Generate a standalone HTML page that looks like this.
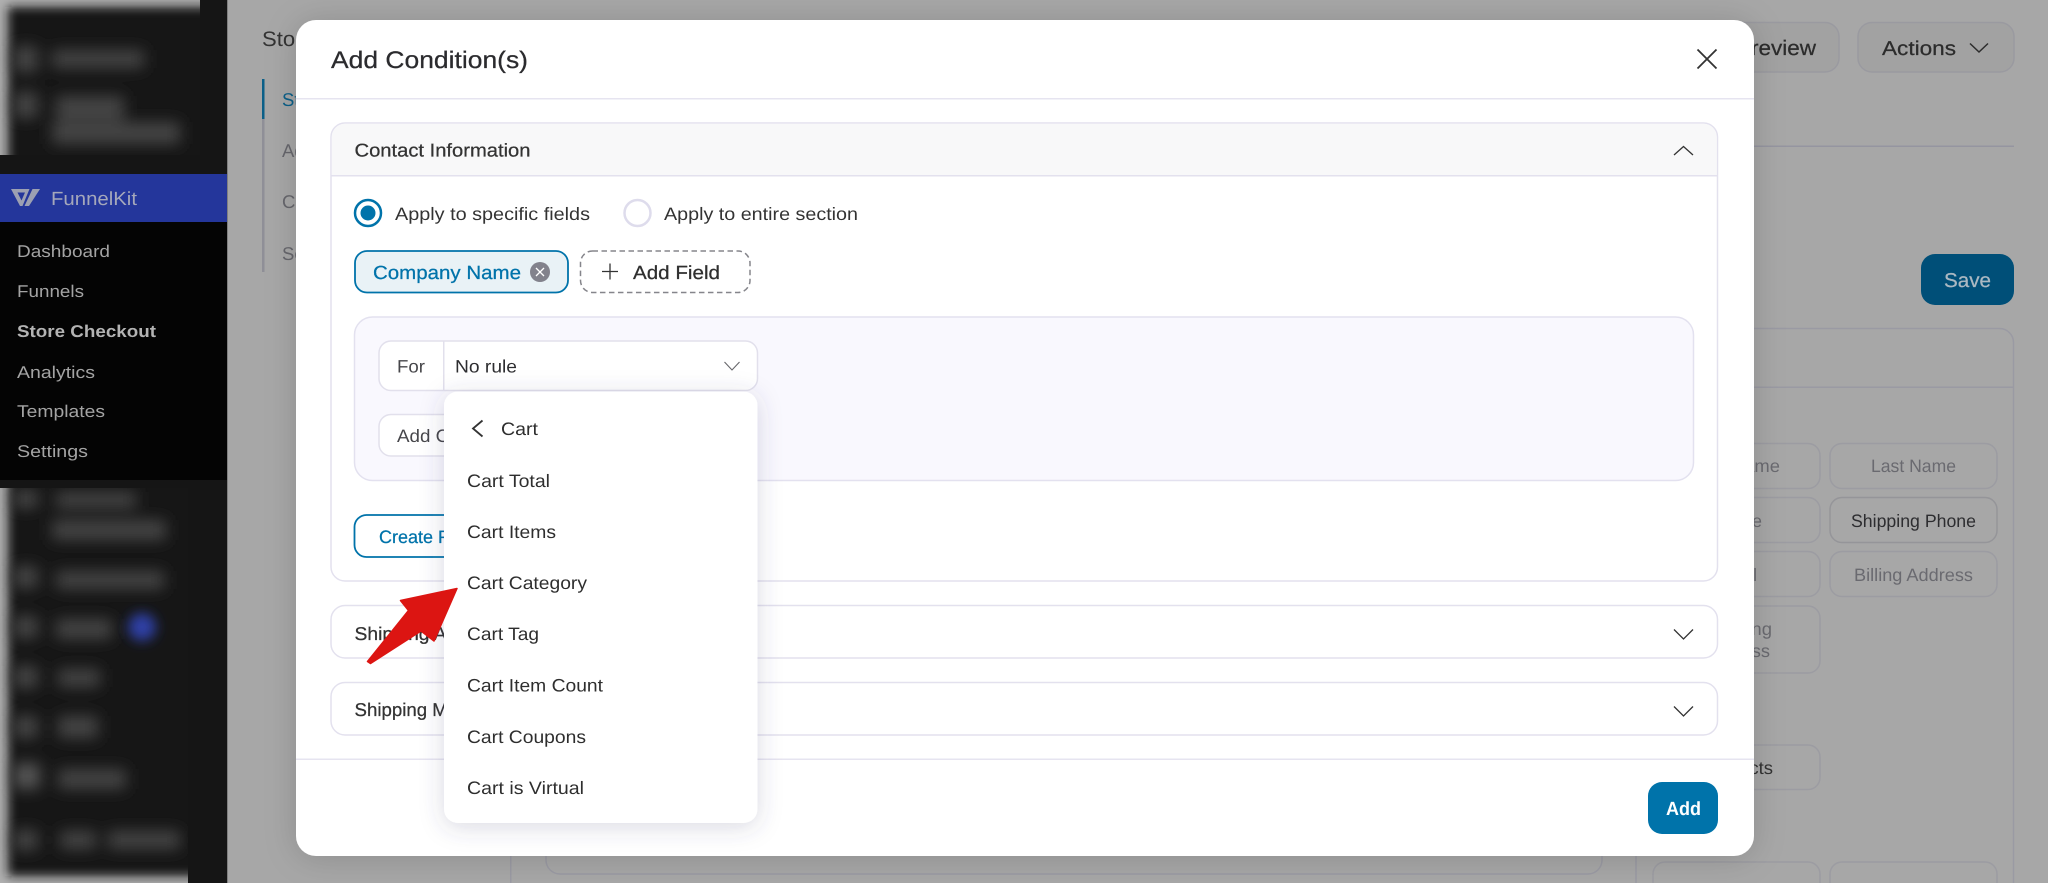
<!DOCTYPE html>
<html lang="en"><head><meta charset="utf-8"><title>Add Condition(s)</title>
<style>
html,body{margin:0;padding:0;width:2048px;height:883px;overflow:hidden;background:#a7a7a7}
svg{display:block}
text{font-family:"Liberation Sans",sans-serif;text-rendering:geometricPrecision}
.m{stroke-width:.25}
</style></head><body>
<svg xmlns="http://www.w3.org/2000/svg" width="2048" height="883" viewBox="0 0 2048 883">
<defs>
<filter id="b6" x="-30%" y="-30%" width="160%" height="160%"><feGaussianBlur stdDeviation="5"/></filter>
<filter id="b4" x="-80%" y="-120%" width="260%" height="340%"><feGaussianBlur stdDeviation="7.500"/></filter>
<filter id="b5" x="-100%" y="-100%" width="300%" height="300%"><feGaussianBlur stdDeviation="6"/></filter>
<filter id="ms" x="-10%" y="-10%" width="120%" height="120%"><feDropShadow dx="0" dy="2" stdDeviation="16" flood-color="#000" flood-opacity=".16"/></filter>
<filter id="ds" x="-25%" y="-15%" width="150%" height="130%"><feDropShadow dx="0" dy="4" stdDeviation="12" flood-color="#4a4870" flood-opacity=".2"/></filter>
<clipPath id="c1"><rect x="0" y="0" width="200" height="155"/></clipPath>
<clipPath id="c2"><rect x="0" y="488" width="188" height="395"/></clipPath>
</defs>

<rect width="2048" height="883" fill="#a7a7a7"/>

<!-- Sidebar -->
<rect width="227" height="883" fill="#151515"/>
<rect x="227" width="1" height="883" fill="#808080"/>
<g clip-path="url(#c1)">
<rect x="0" y="0" width="200" height="155" fill="#b0b0b0"/>
<rect x="8" y="7" width="400" height="400" fill="#151515" filter="url(#b6)"/>
<g filter="url(#b4)" fill="#444">
<rect x="14" y="46" width="24" height="26"/><rect x="52" y="50" width="92" height="18"/>
<rect x="14" y="92" width="24" height="26"/><rect x="56" y="96" width="68" height="24"/>
<rect x="52" y="122" width="128" height="22"/>
</g></g>
<g clip-path="url(#c2)">
<rect x="0" y="488" width="188" height="395" fill="#b0b0b0"/>
<rect x="8" y="470" width="400" height="406" fill="#151515" filter="url(#b6)"/>
<g filter="url(#b4)" fill="#444">
<rect x="14" y="490" width="24" height="18"/><rect x="56" y="492" width="80" height="16"/><rect x="52" y="520" width="114" height="20"/>
<rect x="14" y="566" width="24" height="22"/><rect x="56" y="571" width="108" height="18"/>
<rect x="14" y="616" width="24" height="22"/><rect x="56" y="619" width="56" height="20"/>
<rect x="14" y="666" width="24" height="22"/><rect x="58" y="669" width="42" height="18"/>
<rect x="14" y="716" width="24" height="22"/><rect x="58" y="716" width="40" height="22"/>
<rect x="14" y="763" width="26" height="26" fill="#555"/><rect x="58" y="769" width="68" height="20"/>
<rect x="14" y="830" width="24" height="20"/><rect x="60" y="831" width="36" height="18"/><rect x="108" y="831" width="72" height="18"/>
</g>
<circle cx="142" cy="627" r="14" fill="#2f40a5" filter="url(#b5)"/>
</g>
<rect x="0" y="174" width="227" height="48" fill="#24369b"/>
<path d="M11 189H29.500L22.500 206H20ZM17.500 192.500L21.500 200.500L25 192.500Z" fill="#9ca0b2" fill-rule="evenodd"/>
<path d="M32.500 189H40L29 206H24.500Z" fill="#9ca0b2"/>
<text x="51" y="205" font-size="19" fill="#a5a8bb" textLength="86" lengthAdjust="spacingAndGlyphs">FunnelKit</text>
<rect x="0" y="222" width="227" height="258" fill="#040404"/>
<g font-size="17" fill="#a3a3a3">
<text x="17" y="257" textLength="93" lengthAdjust="spacingAndGlyphs">Dashboard</text>
<text x="17" y="297" textLength="67" lengthAdjust="spacingAndGlyphs">Funnels</text>
<text x="17" y="337" textLength="139" lengthAdjust="spacingAndGlyphs" font-weight="700" fill="#b3b3b3">Store Checkout</text>
<text x="17" y="378" textLength="78" lengthAdjust="spacingAndGlyphs">Analytics</text>
<text x="17" y="417" textLength="88" lengthAdjust="spacingAndGlyphs">Templates</text>
<text x="17" y="457" textLength="71" lengthAdjust="spacingAndGlyphs">Settings</text>
</g>

<!-- Background page -->
<text x="262" y="46" font-size="21" fill="#333" textLength="152" lengthAdjust="spacingAndGlyphs">Store Checkout</text>
<rect x="262" y="79" width="2.500" height="193" fill="#8f8f97"/>
<rect x="262" y="79" width="2.500" height="40" fill="#0b5f88"/>
<g font-size="18.500" fill="#66666c">
<text x="282" y="106" fill="#0b5f88">Store</text>
<text x="282" y="157">Add</text>
<text x="282" y="208">Cart</text>
<text x="282" y="260">Settings</text>
</g>
<rect x="1500" y="22.500" width="339" height="49.500" rx="14" fill="#a2a2a2" stroke="#9a9aa0" stroke-width="1.500"/>
<text x="1736" y="55" font-size="21" fill="#2c2c2c" stroke="#2c2c2c" class="m" textLength="80" lengthAdjust="spacingAndGlyphs">Preview</text>
<rect x="1858" y="22.500" width="156" height="49.500" rx="14" fill="#a2a2a2" stroke="#9a9aa0" stroke-width="1.500"/>
<text x="1882" y="55" font-size="20" fill="#2c2c2c" stroke="#2c2c2c" class="m" textLength="74" lengthAdjust="spacingAndGlyphs">Actions</text>
<path d="M1970 43.500L1979 52L1988 43.500" fill="none" stroke="#2c2c2c" stroke-width="1.500"/>
<rect x="1700" y="145.500" width="314" height="1.500" fill="#9595a0"/>
<rect x="1921" y="254" width="93" height="51" rx="14" fill="#004f78"/>
<text x="1944" y="287" font-size="20" fill="#aab8c2" stroke="#aab8c2" class="m" textLength="47" lengthAdjust="spacingAndGlyphs">Save</text>
<path d="M1636 883V342.500a14 14 0 0 1 14-14H1999.500a14 14 0 0 1 14 14V883" fill="none" stroke="#9a9aa3" stroke-width="1.500"/>
<rect x="1636" y="386.500" width="377.500" height="1.500" fill="#9a9aa3"/>
<rect x="510" y="840" width="1.500" height="43" fill="#9a9aa3"/>
<rect x="546" y="780" width="1056" height="94" rx="14" fill="none" stroke="#9a9aa3" stroke-width="1.500"/>
<g fill="none" stroke="#9c9ca2" stroke-width="1.500">
<rect x="1653" y="443.500" width="167" height="45" rx="12"/>
<rect x="1653" y="497.500" width="167" height="45" rx="12"/>
<rect x="1653" y="551.500" width="167" height="45" rx="12"/>
<rect x="1653" y="606" width="167" height="67" rx="12"/>
<rect x="1653" y="745" width="167" height="44.500" rx="12"/>
<path d="M1653 883V874a12 12 0 0 1 12-12H1808a12 12 0 0 1 12 12V883"/>
<rect x="1830" y="443.500" width="167" height="45" rx="12"/>
<rect x="1830" y="497.500" width="167" height="45" rx="12" stroke="#959599"/>
<rect x="1830" y="551.500" width="167" height="45" rx="12"/>
<path d="M1830 883V874a12 12 0 0 1 12-12H1985a12 12 0 0 1 12 12V883"/>
</g>
<g font-size="18" fill="#6a6a70">
<text x="1690" y="472" textLength="90" lengthAdjust="spacingAndGlyphs">First Name</text>
<text x="1710" y="527" textLength="52" lengthAdjust="spacingAndGlyphs">Phone</text>
<text x="1713" y="581" textLength="44" lengthAdjust="spacingAndGlyphs">Email</text>
<text x="1700" y="635" textLength="72" lengthAdjust="spacingAndGlyphs">Shipping</text>
<text x="1703" y="657" textLength="67" lengthAdjust="spacingAndGlyphs">Address</text>
<text x="1700" y="774" fill="#333" textLength="73" lengthAdjust="spacingAndGlyphs">Products</text>
<text x="1871" y="472" textLength="85" lengthAdjust="spacingAndGlyphs">Last Name</text>
<text x="1851" y="527" fill="#2d2d30" textLength="125" lengthAdjust="spacingAndGlyphs">Shipping Phone</text>
<text x="1854" y="581" textLength="119" lengthAdjust="spacingAndGlyphs">Billing Address</text>
</g>

<!-- Modal -->
<rect x="296" y="20" width="1458" height="836" rx="20" fill="#fff" filter="url(#ms)"/>
<text x="331" y="68" font-size="24" fill="#2b2b2e" stroke="#2b2b2e" class="m" textLength="197" lengthAdjust="spacingAndGlyphs">Add Condition(s)</text>
<path d="M1697.500 49.500L1716.500 68.500M1716.500 49.500L1697.500 68.500" stroke="#333" stroke-width="1.800" fill="none"/>
<rect x="296" y="98" width="1458" height="1.500" fill="#e6e4f0"/>

<!-- Contact section -->
<rect x="331" y="123" width="1386.500" height="458" rx="14" fill="#fff" stroke="#e3e1ee" stroke-width="1.500"/>
<path d="M331.800 175V137a13.200 13.200 0 0 1 13.200-13.200H1703.500a13.200 13.200 0 0 1 13.200 13.200V175Z" fill="#f8f8f9"/>
<rect x="331" y="175" width="1386.500" height="1.500" fill="#e3e1ee"/>
<text x="354.500" y="156.500" font-size="18.500" fill="#333" stroke="#333" class="m" textLength="176" lengthAdjust="spacingAndGlyphs">Contact Information</text>
<path d="M1674 155L1683.500 146.500L1693 155" fill="none" stroke="#333" stroke-width="1.300"/>
<circle cx="368" cy="213" r="13" fill="#fff" stroke="#0073aa" stroke-width="2.500"/>
<circle cx="368" cy="213" r="7.500" fill="#0073aa"/>
<text x="395" y="220" font-size="18" fill="#333" textLength="195" lengthAdjust="spacingAndGlyphs">Apply to specific fields</text>
<circle cx="637.500" cy="213" r="13" fill="#fff" stroke="#dedcec" stroke-width="2.500"/>
<text x="664" y="220" font-size="18" fill="#333" textLength="194" lengthAdjust="spacingAndGlyphs">Apply to entire section</text>
<rect x="355" y="251" width="213" height="41.500" rx="12" fill="#e9f2f6" stroke="#0073aa" stroke-width="1.800"/>
<text x="373" y="279" font-size="19" fill="#0073aa" stroke="#0073aa" class="m" textLength="148" lengthAdjust="spacingAndGlyphs">Company Name</text>
<circle cx="540" cy="272" r="10" fill="#82828c"/>
<path d="M536 268L544 276M544 268L536 276" stroke="#fff" stroke-width="1.300" fill="none"/>
<rect x="580.500" y="251" width="169.500" height="41.500" rx="12" fill="#fff" stroke="#85858b" stroke-width="1.500" stroke-dasharray="5.500 3.500"/>
<path d="M602 271.500H618M610 263.500V279.500" stroke="#333" stroke-width="1.300" fill="none"/>
<text x="633" y="279" font-size="19" fill="#2f2f2f" stroke="#2f2f2f" class="m" textLength="87" lengthAdjust="spacingAndGlyphs">Add Field</text>

<!-- Rule panel -->
<rect x="354.500" y="317" width="1339" height="163.500" rx="18" fill="#f9f8fe" stroke="#e3e1ef" stroke-width="1.500"/>
<rect x="379" y="341" width="378.500" height="49.500" rx="12" fill="#fff" stroke="#e2e0ec" stroke-width="1.500"/>
<rect x="443" y="341" width="1.500" height="49.500" fill="#e2e0ec"/>
<text x="397" y="372.500" font-size="18" fill="#46464a" textLength="28" lengthAdjust="spacingAndGlyphs">For</text>
<text x="455" y="372.500" font-size="18" fill="#2d2d30" textLength="62" lengthAdjust="spacingAndGlyphs">No rule</text>
<path d="M724.500 362L732 370L739.500 362" fill="none" stroke="#66666a" stroke-width="1.100"/>
<rect x="379" y="414.500" width="120" height="41.500" rx="12" fill="#fff" stroke="#e2e0ec" stroke-width="1.500"/>
<text x="397" y="442" font-size="18" fill="#46464a" textLength="118" lengthAdjust="spacingAndGlyphs">Add Condition</text>
<rect x="354.500" y="515" width="130" height="42" rx="12" fill="#fff" stroke="#0073aa" stroke-width="1.800"/>
<text x="379" y="543" font-size="18" fill="#0073aa" stroke="#0073aa" class="m">Create Field</text>

<!-- Shipping sections -->
<rect x="331" y="605.500" width="1386.500" height="52.500" rx="14" fill="#fff" stroke="#e3e1ee" stroke-width="1.500"/>
<text x="354.500" y="640" font-size="18.500" fill="#333" stroke="#333" class="m" textLength="150" lengthAdjust="spacingAndGlyphs">Shipping Address</text>
<path d="M1674 629.500L1683.500 639L1693 629.500" fill="none" stroke="#333" stroke-width="1.300"/>
<rect x="331" y="682.500" width="1386.500" height="52.500" rx="14" fill="#fff" stroke="#e3e1ee" stroke-width="1.500"/>
<text x="354.500" y="716" font-size="18.500" fill="#333" stroke="#333" class="m" textLength="140" lengthAdjust="spacingAndGlyphs">Shipping Method</text>
<path d="M1674 706.500L1683.500 716L1693 706.500" fill="none" stroke="#333" stroke-width="1.300"/>

<!-- Footer -->
<rect x="296" y="758.500" width="1458" height="1.500" fill="#e6e4f0"/>
<rect x="1648" y="782" width="70" height="52" rx="14" fill="#0073aa"/>
<text x="1666" y="815" font-size="19" font-weight="700" fill="#fff" textLength="35" lengthAdjust="spacingAndGlyphs">Add</text>

<!-- Dropdown -->
<rect x="444" y="391.500" width="313.500" height="431.500" rx="14" fill="#fff" filter="url(#ds)"/>
<path d="M482.500 420.500L473 428.500L482.500 436.500" fill="none" stroke="#333" stroke-width="1.800"/>
<text x="501" y="435" font-size="18" fill="#2e2e2e" textLength="37" lengthAdjust="spacingAndGlyphs">Cart</text>
<g font-size="18" fill="#2e2e2e">
<text x="467" y="487" textLength="83" lengthAdjust="spacingAndGlyphs">Cart Total</text>
<text x="467" y="538" textLength="89" lengthAdjust="spacingAndGlyphs">Cart Items</text>
<text x="467" y="589" textLength="120" lengthAdjust="spacingAndGlyphs">Cart Category</text>
<text x="467" y="640" textLength="72" lengthAdjust="spacingAndGlyphs">Cart Tag</text>
<text x="467" y="691.500" textLength="136" lengthAdjust="spacingAndGlyphs">Cart Item Count</text>
<text x="467" y="743" textLength="119" lengthAdjust="spacingAndGlyphs">Cart Coupons</text>
<text x="467" y="794" textLength="117" lengthAdjust="spacingAndGlyphs">Cart is Virtual</text>
</g>
<path d="M457 588.500L400.500 600.500L408.500 610.500L367.500 661.500L370.500 663.500L421 631L434 641Z" fill="#dc1512" stroke="#dc1512" stroke-width="1.500" stroke-linejoin="round"/>
</svg>
</body></html>
